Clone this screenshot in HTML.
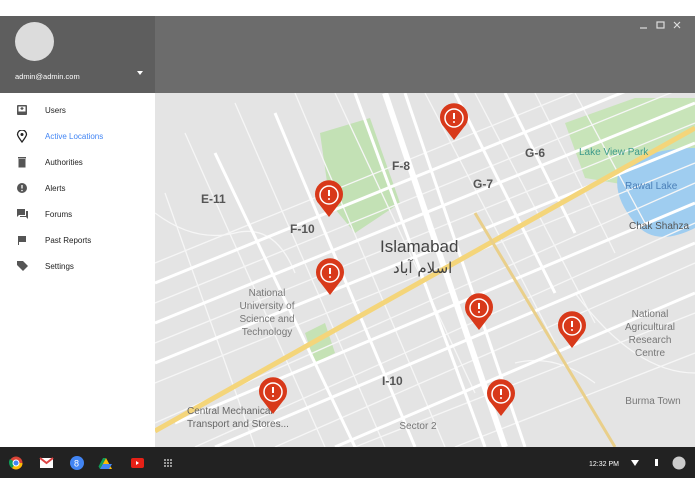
<!DOCTYPE html>
<html><head><meta charset="utf-8"><style>
*{margin:0;padding:0;box-sizing:border-box}
body{width:695px;height:494px;background:#fff;font-family:"Liberation Sans","Noto Sans CJK SC",sans-serif;position:relative;overflow:hidden}
#side{position:absolute;left:0;top:16px;width:155px;height:431px;background:#fff}
#sh{height:77px;background:#5e5e5e;position:relative}
#av{position:absolute;left:15px;top:6px;width:39px;height:39px;border-radius:50%;background:#dcdcdc}
#em{position:absolute;left:15px;top:56px;font-size:7.5px;color:#fff}
#tri{position:absolute;left:137px;top:55px;border-left:3.5px solid transparent;border-right:3.5px solid transparent;border-top:4px solid #fff}
.it{position:absolute;left:0;height:20px;width:155px;font-size:8px;color:#222}
.it span{position:absolute;left:45px;top:6px}
.it svg{position:absolute;left:16px;top:4px}
#hdr{position:absolute;left:155px;top:16px;width:540px;height:77px;background:#6c6c6c}
#map{position:absolute;left:155px;top:93px}
#tb{position:absolute;left:0;top:447px;width:695px;height:31px;background:#222}
</style></head><body>
<div id="side">
 <div id="sh"><div id="av"></div><div id="em">admin@admin.com</div><div id="tri"></div></div>
 <div class="it" style="top:84px"><svg width="12" height="12" viewBox="0 0 12 12"><rect x="1" y="1" width="10" height="10" rx="1" fill="#555"/><rect x="2.5" y="2.5" width="7" height="5" fill="#fff"/><path d="M6 3v3M4.5 4.5h3" stroke="#555" stroke-width="1.2"/></svg><span>Users</span></div>
 <div class="it" style="top:110px"><svg width="12" height="13" viewBox="0 0 12 13"><path d="M6 12C3 8 1.5 6 1.5 4.5a4.5 4.5 0 0 1 9 0C10.5 6 9 8 6 12z" fill="none" stroke="#222" stroke-width="1.3"/><circle cx="6" cy="4.5" r="1.5" fill="#222"/></svg><span style="color:#4285f4">Active Locations</span></div>
 <div class="it" style="top:136px"><svg width="12" height="12" viewBox="0 0 12 12"><rect x="2.5" y="3" width="7" height="8.5" fill="#555"/><rect x="2" y="1" width="8" height="1.5" fill="#555"/></svg><span>Authorities</span></div>
 <div class="it" style="top:162px"><svg width="12" height="12" viewBox="0 0 12 12"><circle cx="6" cy="6" r="5" fill="#555"/><path d="M6 3v3.5" stroke="#fff" stroke-width="1.3"/><circle cx="6" cy="8.5" r=".8" fill="#fff"/></svg><span>Alerts</span></div>
 <div class="it" style="top:188px"><svg width="13" height="12" viewBox="0 0 13 12"><path d="M1 1h8v6H3L1 9z" fill="#555"/><path d="M10 3h2v8l-2-2H4V8h6z" fill="#555"/></svg><span>Forums</span></div>
 <div class="it" style="top:214px"><svg width="12" height="12" viewBox="0 0 12 12"><path d="M2 2h1v9H2zM3 2h7v6H3z" fill="#555"/></svg><span>Past Reports</span></div>
 <div class="it" style="top:240px"><svg width="13" height="12" viewBox="0 0 13 12"><path d="M1 1h6l5 5-5 5-6-6z" fill="#555"/></svg><span>Settings</span></div>
</div>
<div id="hdr">
 <svg style="position:absolute;left:482px;top:4px" width="50" height="12"><path d="M3 8h7" stroke="#ddd" stroke-width="1.2"/><rect x="20" y="2" width="7" height="6" fill="none" stroke="#ddd" stroke-width="1.2"/><path d="M37 2l6 6M43 2l-6 6" stroke="#ddd" stroke-width="1.2"/></svg>
</div>
<svg id="map" width="540" height="354" viewBox="0 0 540 354" font-family="Liberation Sans,sans-serif">
 <rect width="540" height="354" fill="#e4e4e4"/>
 <path d="M165 40L215 25 245 110 200 140 175 110z" fill="#c3e1b5"/>
 <path d="M150 240l20-10 10 30-20 10z" fill="#c5e2b5"/>
 <path d="M410 30l70-25 60 0 0 60-50 30-60-10z" fill="#c8e4b9"/>
 <path d="M465 75q30-20 75-20v80q-40 20-60-5q-25-30-15-55z" fill="#9fcdf0"/>
 <g stroke="#f6f6f6" stroke-width="1.3" fill="none">
  <path d="M0 170L540 -50M0 210L540 -10M0 250L540 30M0 290L540 70M0 330L540 90M40 354L540 130M120 354L540 170M200 354L540 220M300 354L540 260"/>
  <path d="M30 40L170 354M80 10L230 354M140 0L290 354M180 0L320 300M270 0L400 250M320 0L440 230M380 0L460 160M420 0L490 130M10 100L100 354"/>
  <path d="M0 120q40 30 80 20t60 40M420 200q30 40 60 60t60 20M360 270q40-10 80 20"/>
 </g>
 <g stroke="#fff" stroke-width="3" fill="none">
  <path d="M0 190L540 -30M0 230L540 10M0 270L540 50M20 330L540 110M60 354L540 150M180 354L540 200"/>
  <path d="M60 60L200 354M120 20L260 354M200 0L330 354M250 0L370 354M300 0L400 200M350 0L420 140"/>
 </g>
 <path d="M230 0L350 354" stroke="#fff" stroke-width="6"/>
 <path d="M0 338L540 35" stroke="#f4d57a" stroke-width="5"/>
 <path d="M320 120L460 354" stroke="#e9cf8a" stroke-width="3"/>
 <g fill="#555" font-weight="bold" font-size="12">
  <text x="46" y="110">E-11</text><text x="135" y="140">F-10</text><text x="237" y="77">F-8</text><text x="318" y="95">G-7</text><text x="370" y="64">G-6</text><text x="227" y="292">I-10</text>
 </g>
 <text x="225" y="159" font-size="17" fill="#444">Islamabad</text>
 <text x="238" y="180" font-size="15" fill="#444" font-family="DejaVu Sans,sans-serif">اسلام آباد</text>
 <g fill="#777" font-size="10" text-anchor="middle">
  <text x="112" y="203">National</text><text x="112" y="216">University of</text><text x="112" y="229">Science and</text><text x="112" y="242">Technology</text>
  <text x="495" y="224">National</text><text x="495" y="237">Agricultural</text><text x="495" y="250">Research</text><text x="495" y="263">Centre</text>
  <text x="498" y="311">Burma Town</text><text x="263" y="336">Sector 2</text>
 </g>
 <text x="32" y="321" font-size="10" fill="#666">Central Mechanical</text><text x="32" y="334" font-size="10" fill="#666">Transport and Stores...</text>
 <text x="424" y="62" font-size="10" fill="#3c9a8a">Lake View Park</text>
 <text x="470" y="96" font-size="10" fill="#4a7fb8">Rawal Lake</text>
 <text x="474" y="136" font-size="10" fill="#555">Chak Shahza</text>
 <g id="pins" fill="#d8391a">
  <g transform="translate(299,25)"><path d="M0 22L-10 9A14 14 0 1 1 10 9z"/><circle r="9" fill="none" stroke="#fff" stroke-width="1.5"/><path d="M0-5v6" stroke="#fff" stroke-width="2"/><circle cy="4" r="1" fill="#fff"/></g>
  <g transform="translate(174,102)"><path d="M0 22L-10 9A14 14 0 1 1 10 9z"/><circle r="9" fill="none" stroke="#fff" stroke-width="1.5"/><path d="M0-5v6" stroke="#fff" stroke-width="2"/><circle cy="4" r="1" fill="#fff"/></g>
  <g transform="translate(175,180)"><path d="M0 22L-10 9A14 14 0 1 1 10 9z"/><circle r="9" fill="none" stroke="#fff" stroke-width="1.5"/><path d="M0-5v6" stroke="#fff" stroke-width="2"/><circle cy="4" r="1" fill="#fff"/></g>
  <g transform="translate(324,215)"><path d="M0 22L-10 9A14 14 0 1 1 10 9z"/><circle r="9" fill="none" stroke="#fff" stroke-width="1.5"/><path d="M0-5v6" stroke="#fff" stroke-width="2"/><circle cy="4" r="1" fill="#fff"/></g>
  <g transform="translate(417,233)"><path d="M0 22L-10 9A14 14 0 1 1 10 9z"/><circle r="9" fill="none" stroke="#fff" stroke-width="1.5"/><path d="M0-5v6" stroke="#fff" stroke-width="2"/><circle cy="4" r="1" fill="#fff"/></g>
  <g transform="translate(118,299)"><path d="M0 22L-10 9A14 14 0 1 1 10 9z"/><circle r="9" fill="none" stroke="#fff" stroke-width="1.5"/><path d="M0-5v6" stroke="#fff" stroke-width="2"/><circle cy="4" r="1" fill="#fff"/></g>
  <g transform="translate(346,301)"><path d="M0 22L-10 9A14 14 0 1 1 10 9z"/><circle r="9" fill="none" stroke="#fff" stroke-width="1.5"/><path d="M0-5v6" stroke="#fff" stroke-width="2"/><circle cy="4" r="1" fill="#fff"/></g>
 </g>
</svg>
<div id="tb">
 <svg width="695" height="31">
  <circle cx="16" cy="16" r="6.5" fill="#db4437"/><path d="M16 16L22.5 16A6.5 6.5 0 0 1 12 21z" fill="#fbbc05"/><path d="M16 16L12 21A6.5 6.5 0 0 1 10 12z" fill="#0f9d58"/><circle cx="16" cy="16" r="3" fill="#4285f4" stroke="#fff"/>
  <rect x="40" y="11" width="13" height="10" fill="#fff"/><path d="M40 11l6.5 5 6.5-5" stroke="#d44" stroke-width="2" fill="none"/>
  <circle cx="77" cy="16" r="7" fill="#4285f4"/><text x="74" y="19.5" font-size="9" fill="#fff">8</text>
  <path d="M100 22l6-11 6 11z" fill="#fbbc05"/><path d="M100 22l3-5 9 0 -3 5z" fill="#4285f4"/><path d="M106 11l-6 11 -1.5-2.5 4.5-8.5z" fill="#0f9d58"/>
  <rect x="131" y="11" width="13" height="10" rx="2" fill="#e62117"/><path d="M136 14v4l3-2z" fill="#fff"/>
  <g fill="#999"><rect x="164" y="12" width="2" height="2"/><rect x="167" y="12" width="2" height="2"/><rect x="170" y="12" width="2" height="2"/><rect x="164" y="15" width="2" height="2"/><rect x="167" y="15" width="2" height="2"/><rect x="170" y="15" width="2" height="2"/><rect x="164" y="18" width="2" height="2"/><rect x="167" y="18" width="2" height="2"/><rect x="170" y="18" width="2" height="2"/></g>
  <text x="589" y="19" font-size="7" fill="#fff" font-family="Liberation Sans,sans-serif">12:32 PM</text>
  <path d="M631 13h8l-4 6z" fill="#fff"/>
  <rect x="655" y="12" width="3" height="7" fill="#fff"/>
  <circle cx="679" cy="16" r="6.5" fill="#ccc"/>
 </svg>
</div>
</body></html>
